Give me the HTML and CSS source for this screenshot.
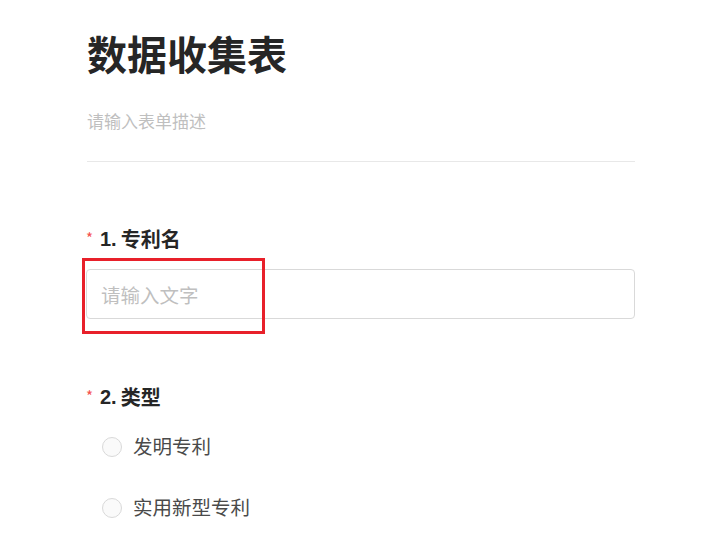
FILE: index.html
```html
<!DOCTYPE html>
<html lang="zh">
<head>
<meta charset="utf-8">
<title>数据收集表</title>
<link rel="stylesheet" href="styles.css">
</head>
<body>
<div class="form">
  <h1 class="title">数据收集表</h1>
  <div class="desc">请输入表单描述</div>
  <div class="divider"></div>

  <div class="question q1">
    <div class="label"><span class="req">*</span><span class="num">1.</span>专利名</div>
    <div class="field">
      <div class="input">请输入文字</div>
      <div class="highlight"></div>
    </div>
  </div>

  <div class="question q2">
    <div class="label"><span class="req">*</span><span class="num">2.</span>类型</div>
    <div class="options">
      <div class="option"><span class="radio"></span><span class="opt-text">发明专利</span></div>
      <div class="option"><span class="radio"></span><span class="opt-text">实用新型专利</span></div>
    </div>
  </div>
</div>
</body>
</html>
```
FILE: styles.css
```css
html, body {
  margin: 0;
  padding: 0;
  background: #fff;
}
body {
  font-family: "Noto Sans CJK SC", "Noto Sans", "Liberation Sans", sans-serif;
  color: #262626;
}
.form {
  width: 549px;
  padding: 25px 0 0 86px;
  display: flex;
  flex-direction: column;
}
.title {
  margin: 0;
  font-size: 40px;
  line-height: 56px;
  font-weight: 700;
  color: #262626;
  padding-left: 1px;
}
.desc {
  margin-top: 28px;
  font-size: 17px;
  line-height: 24px;
  color: #bfbfbf;
  padding-left: 1px;
}
.divider {
  margin-top: 28px;
  height: 1px;
  background: #e8e8e8;
  margin-left: 1px;
}
.question {
  display: flex;
  flex-direction: column;
}
.q1 { margin-top: 63px; }
.q2 { margin-top: 64px; }
.label {
  display: flex;
  align-items: center;
  font-size: 20px;
  line-height: 28px;
  font-weight: 700;
  color: #262626;
}
.req {
  color: #f5504e;
  font-size: 15px;
  font-weight: 400;
  width: 14px;
  position: relative;
  top: -1px;
}
.num {
  margin-right: 4px;
  font-family: "Liberation Sans", "Noto Sans", sans-serif;
}
.field {
  position: relative;
  margin-top: 16px;
}
.input {
  box-sizing: border-box;
  height: 50px;
  border: 1px solid #d9d9d9;
  border-radius: 4px;
  padding-left: 14px;
  display: flex;
  align-items: center;
  font-size: 19.5px;
  color: #bfbfbf;
}
.highlight {
  position: absolute;
  left: -4px;
  top: -11px;
  width: 183px;
  height: 76px;
  box-sizing: border-box;
  border: 3px solid #e8202a;
}
.options {
  margin-top: 21px;
  padding-left: 16px;
  display: flex;
  flex-direction: column;
  gap: 31px;
}
.option {
  display: flex;
  align-items: center;
  height: 30px;
}
.radio {
  box-sizing: border-box;
  width: 20px;
  height: 20px;
  border: 1px solid #d9d9d9;
  border-radius: 50%;
  background: #fafafa;
  margin-right: 11px;
}
.opt-text {
  font-size: 19.5px;
  line-height: 30px;
  color: #4a4a4a;
  position: relative;
  top: -1px;
}
```
